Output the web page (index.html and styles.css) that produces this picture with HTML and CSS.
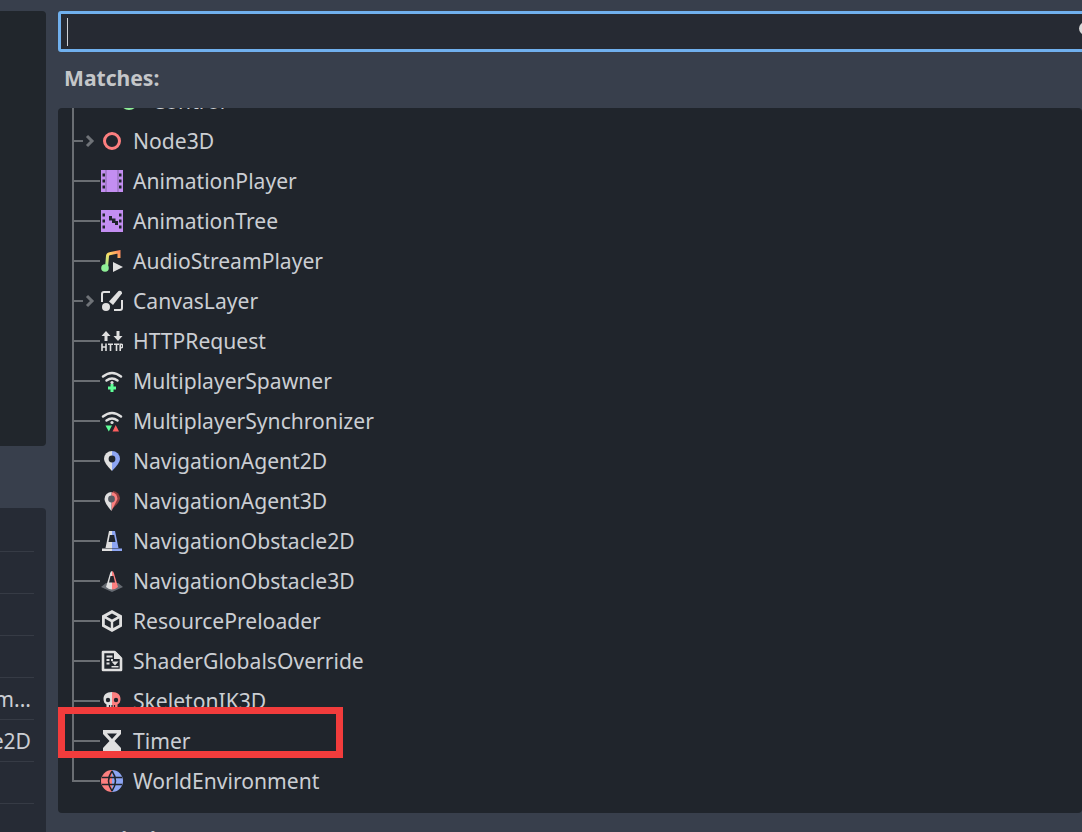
FILE: index.html
```html
<!DOCTYPE html>
<html lang="en">
<head>
<meta charset="utf-8">
<title>Create New Node</title>
<link rel="stylesheet" href="styles.css">
</head>
<body>
<div class="app">
  <aside class="side">
    <div class="side-top"></div>
    <div class="side-bottom">
      <div class="side-row"></div>
      <div class="side-row"></div>
      <div class="side-row"></div>
      <div class="side-row"><span>m...</span></div>
      <div class="side-row"><span>e2D</span></div>
      <div class="side-row"></div>
      <div class="side-row"></div>
    </div>
  </aside>
  <main class="main">
    <div class="search"><span class="caret"></span><span class="search-icon"></span></div>
    <div class="matches">Matches:</div>
    <div class="tree">
      <div class="list">
        <div class="row"><span class="stem"></span><span class="branch"></span><svg class="ico nested" viewBox="0 0 22 22"><circle cx="9" cy="11" r="7.500" fill="none" stroke="#8eef97" stroke-width="3"/></svg><span class="label">Control</span></div>
        <div class="row"><span class="stem"></span><span class="branch short"></span><svg class="chev" viewBox="0 0 10 14"><path d="M2 2 7 7 2 12" fill="none" stroke="#6f7378" stroke-width="3"/></svg><svg class="ico" viewBox="0 0 22 22"><circle cx="11" cy="11" r="7.500" fill="none" stroke="#fc7f7f" stroke-width="3"/></svg><span class="label">Node3D</span></div>
        <div class="row"><span class="stem"></span><span class="branch"></span><svg class="ico" viewBox="0 0 22 22"><path fill="#c38ef1" fill-rule="evenodd" d="M0 0h22v22H0zM1.500 3.500v3h2.500v-3zM1.500 9.500v3h2.500v-3zM1.500 15.500v3h2.500v-3zM18 3.500v3h2.500v-3zM18 9.500v3h2.500v-3zM18 15.500v3h2.500v-3z"/><path stroke="#20252c" stroke-opacity=".45" stroke-width=".8" d="M5 0v22M17 0v22"/></svg><span class="label">AnimationPlayer</span></div>
        <div class="row"><span class="stem"></span><span class="branch"></span><svg class="ico" viewBox="0 0 22 22"><path fill="#c38ef1" fill-rule="evenodd" d="M0 0h22v22H0zM1.500 3.500v3h2.500v-3zM1.500 9.500v3h2.500v-3zM1.500 15.500v3h2.500v-3zM18 3.500v3h2.500v-3zM18 9.500v3h2.500v-3zM18 15.500v3h2.500v-3z"/><path fill="#20252c" d="M8 6h3v2.500h3.500V11H17v4h-3v-2h-3v-2.500H8z"/></svg><span class="label">AnimationTree</span></div>
        <div class="row"><span class="stem"></span><span class="branch"></span><svg class="ico" viewBox="0 0 22 22"><defs><linearGradient id="note" x1="0" y1="1" x2="1" y2="0"><stop offset="0" stop-color="#8eef97"/><stop offset=".5" stop-color="#ffdd65"/><stop offset="1" stop-color="#ff8a5c"/></linearGradient></defs><path d="M5.500 17.500 6.500 6q.2-2 2-2.300L18 1.800V8" fill="none" stroke="url(#note)" stroke-width="3"/><circle cx="4" cy="18" r="3.800" fill="#8eef97"/><path fill="#e0e0e0" d="M12 12l10 5-10 5z"/></svg><span class="label">AudioStreamPlayer</span></div>
        <div class="row"><span class="stem"></span><span class="branch short"></span><svg class="chev" viewBox="0 0 10 14"><path d="M2 2 7 7 2 12" fill="none" stroke="#6f7378" stroke-width="3"/></svg><svg class="ico" viewBox="0 0 22 22"><path d="M9 2H3Q1 2 1 4v8M13 20h6q2 0 2-2v-8" fill="none" stroke="#e0e0e0" stroke-width="2"/><path fill="#e0e0e0" d="M17.500 1q3.500-1 3.500 2.500L12 15l-4-3.500z"/><circle cx="5" cy="17" r="4" fill="#e0e0e0"/></svg><span class="label">CanvasLayer</span></div>
        <div class="row"><span class="stem"></span><span class="branch"></span><svg class="ico" viewBox="0 0 22 22"><path fill="#e0e0e0" d="M5 1l4.500 5H6.500v5h-3V6H.500zM17 11l-4.500-5h3V1h3v5h3z"/><path fill="none" stroke="#e0e0e0" stroke-width="1.600" d="M1 13.500V21M5 13.500V21M1 17h4M7 14.200h5M9.500 14.200V21M13 14.200h5M15.500 14.200V21"/><path fill="none" stroke="#e0e0e0" stroke-width="1.600" d="M19.200 21v-6.800h1q1.500 0 1.500 1.800t-1.500 1.800h-1"/></svg><span class="label">HTTPRequest</span></div>
        <div class="row"><span class="stem"></span><span class="branch"></span><svg class="ico" viewBox="0 0 22 22"><path fill="none" stroke="#e0e0e0" stroke-width="2.400" stroke-linecap="round" d="M2 6.500q9-7 18 0M5.500 10.500q5.500-4 11 0"/><circle cx="11" cy="12.500" r="1.600" fill="#e0e0e0"/><path fill="#5fff97" d="M9.500 14h3v2.500h2.500v3h-2.500V22h-3v-2.500H7v-3h2.500z"/></svg><span class="label">MultiplayerSpawner</span></div>
        <div class="row"><span class="stem"></span><span class="branch"></span><svg class="ico" viewBox="0 0 22 22"><path fill="none" stroke="#e0e0e0" stroke-width="2.400" stroke-linecap="round" d="M2 6.500q9-7 18 0M5.500 10.500q5.500-4 11 0"/><circle cx="11" cy="12.500" r="1.600" fill="#e0e0e0"/><path fill="#5fff97" d="M4.500 15.500h6.500l-3.200 6z"/><path fill="#ff5f5f" d="M11.500 21.500l3.200-6.500 3.300 6.500z"/></svg><span class="label">MultiplayerSynchronizer</span></div>
        <div class="row"><span class="stem"></span><span class="branch"></span><svg class="ico" viewBox="0 0 22 22"><path fill="#e0e0e0" d="M11 1a8 8 0 0 0-8 8q0 4 8 12z"/><path fill="#8da5f3" d="M11 1a8 8 0 0 1 8 8q0 4-8 12z"/><circle cx="11" cy="9" r="3.400" fill="#20252c"/></svg><span class="label">NavigationAgent2D</span></div>
        <div class="row"><span class="stem"></span><span class="branch"></span><svg class="ico" viewBox="0 0 22 22"><path fill="#8f3f3f" d="M12 1a7.500 7.500 0 0 1 7 7q0 4-7 10z"/><path fill="#fc7f7f" d="M10.500 2a7 7 0 0 1 6 7l-6 12z"/><path fill="#e0e0e0" d="M10.500 2a7 7 0 0 0-7 7q0 4 7 12z"/><circle cx="10.500" cy="9" r="3.400" fill="#555a62"/></svg><span class="label">NavigationAgent3D</span></div>
        <div class="row"><span class="stem"></span><span class="branch"></span><svg class="ico" viewBox="0 0 22 22"><path fill="#e0e0e0" d="M8 1h3v17H4.500zM1 18.500h10V21H1z"/><path fill="#8da5f3" d="M11 1h3l3.500 17H11zM11 18.500h10V21H11z"/><path fill="#20252c" d="M8.800 5h4.400l1.300 7h-7z"/></svg><span class="label">NavigationObstacle2D</span></div>
        <div class="row"><span class="stem"></span><span class="branch"></span><svg class="ico" viewBox="0 0 22 22"><path fill="#666b72" d="M5 13 0 17l11 5 11-5-5-4z"/><path fill="#e0e0e0" d="M11 1Q9.500 1 9 3.500L5 17q3 2.500 6 2.500z"/><path fill="#fc7f7f" d="M11 1q1.500 0 2 2.500L17 17q-3 2.500-6 2.500z"/><path fill="#20252c" d="M8 12.500h6L12.500 6h-3z"/></svg><span class="label">NavigationObstacle3D</span></div>
        <div class="row"><span class="stem"></span><span class="branch"></span><svg class="ico" viewBox="0 0 22 22"><path fill="#e0e0e0" d="M11 0l10 5.500v11L11 22 1 16.500v-11z"/><path fill="#20252c" d="M11 3.500l5.500 3L11 9.500l-5.500-3zM3.800 8.500 9.800 12v6l-6-3.300zM18.200 8.500 12.200 12v6l6-3.300z"/></svg><span class="label">ResourcePreloader</span></div>
        <div class="row"><span class="stem"></span><span class="branch"></span><svg class="ico" viewBox="0 0 22 22"><path fill="none" stroke="#e0e0e0" stroke-width="2.600" stroke-linejoin="round" d="M2 2h11.500L20 8.500V20H2z"/><path fill="#e0e0e0" d="M13 2h2l5 5v2h-7zM5.500 5.500h6v2h-6zM5.500 9h3v2h-3zM10 9h2v2h-2zM5.500 12.500h3v2h-3zM10.500 11.500h7L14 15.500zM10.500 16h7v1.500h-7z"/></svg><span class="label">ShaderGlobalsOverride</span></div>
        <div class="row"><span class="stem"></span><span class="branch"></span><svg class="ico" viewBox="0 0 22 22"><path fill="#e0e0e0" d="M11 2C5 2 2.500 5 2.500 9q0 4 3 5.500V20H11z"/><path fill="#fc7f7f" d="M11 2c6 0 8.500 3 8.500 7q0 4-3 5.500V20H11z"/><circle cx="7" cy="10" r="2.200" fill="#20252c"/><circle cx="15" cy="10" r="2.200" fill="#20252c"/><path stroke="#20252c" stroke-width="1.200" d="M8.500 15v5M11 15v5M13.500 15v5"/></svg><span class="label">SkeletonIK3D</span></div>
        <div class="row"><span class="stem"></span><span class="branch"></span><svg class="ico" viewBox="0 0 22 22"><path fill="#e0e0e0" d="M2 0h18v4l-6.500 7 6.500 7v4H2v-4l6.500-7L2 4zM6 3.500 11 9l5-5.500z"/></svg><span class="label">Timer</span></div>
        <div class="row last"><span class="stem"></span><span class="branch"></span><svg class="ico" viewBox="0 0 22 22"><path fill="#fc7f7f" d="M11 0a11 11 0 0 0 0 22z"/><path fill="#8da5f3" d="M11 0a11 11 0 0 1 0 22z"/><path fill="none" stroke="#20252c" stroke-width="1.500" d="M1 7.500h20M1 14.500h20M11 1q-7 10 0 20M11 1q7 10 0 20"/></svg><span class="label">WorldEnvironment</span></div>
      </div>
    </div>
    <div class="desc">Description:</div>
  </main>
</div>
<div class="highlight"></div>
</body>
</html>
```

FILE: styles.css
```css
* { box-sizing: border-box; }
html, body { margin: 0; height: 100%; }
body {
  width: 1082px;
  height: 832px;
  overflow: hidden;
  position: relative;
  background: #383f4c;
  font-family: "Noto Sans", sans-serif;
  color: #cdcfd2;
}
.app { display: flex; gap: 12px; height: 832px; }
.side { width: 46px; flex: none; display: flex; flex-direction: column; padding-top: 11px; }
.side-top { height: 435px; flex: none; background: #21262c; border-radius: 0 4px 4px 0; }
.side-bottom {
  margin-top: 62px;
  flex: none;
  height: 324px;
  background: #262b35;
  border-radius: 0 4px 0 0;
  padding-top: 43px;
  padding-right: 12px;
  overflow: hidden;
}
.side-row {
  height: 42px;
  display: flex;
  justify-content: flex-end;
  font-size: 21.100px;
  line-height: 42px;
  white-space: nowrap;
  border-top: 1px solid #363b45;
  color: #cbced3;
  padding-right: 3px;
}
.side-row span { flex: none; }
.main { flex: 1; min-width: 0; padding-top: 11px; display: flex; flex-direction: column; }
.search {
  height: 41px;
  width: 1040px;
  flex: none;
  background: #262a33;
  border: 3px solid #70b0ee;
  border-radius: 3px;
  display: flex;
  align-items: center;
  padding-left: 6px;
  position: relative;
}
.caret { width: 1px; height: 28px; background: #cdd0d5; }
.search-icon {
  position: absolute;
  left: 1018px;
  top: 8px;
  width: 13px;
  height: 13px;
  border-radius: 50%;
  background: #d8d8d8;
}
.matches {
  height: 56px;
  flex: none;
  padding: 11px 0 0 6px;
  font-size: 21.100px;
  font-weight: 700;
  line-height: 30px;
  color: #c4c6c9;
}
.tree {
  height: 705px;
  flex: none;
  background: #20252c;
  border-radius: 4px;
  overflow: hidden;
}
.list { margin-top: -27px; }
.row {
  height: 40px;
  display: flex;
  align-items: center;
  padding-left: 14px;
}
.stem { width: 2px; height: 40px; flex: none; background: #6a6e73; }
.branch { width: 26px; height: 2px; flex: none; background: #6a6e73; }
.branch.short { width: 9px; }
.chev { width: 10px; height: 14px; flex: none; margin-right: 7px; margin-left: 2px; }
.chev + .ico { margin-left: -1px; }
.ico { width: 22px; height: 22px; flex: none; margin-left: 1px; }
.ico.nested { margin-left: 20px; }
.label {
  margin-left: 10px;
  font-size: 21.100px;
  line-height: 40px;
  color: #cbced3;
  white-space: nowrap;
}
.last .stem { height: 21px; align-self: flex-start; }
.desc {
  margin-top: 11px;
  padding-left: 4px;
  font-size: 21.100px;
  font-weight: 700;
  line-height: 30px;
  color: #c4c6c9;
}
.highlight {
  position: absolute;
  left: 58px;
  top: 707px;
  width: 285px;
  height: 51px;
  border: 7px solid #f23c3c;
}
```
